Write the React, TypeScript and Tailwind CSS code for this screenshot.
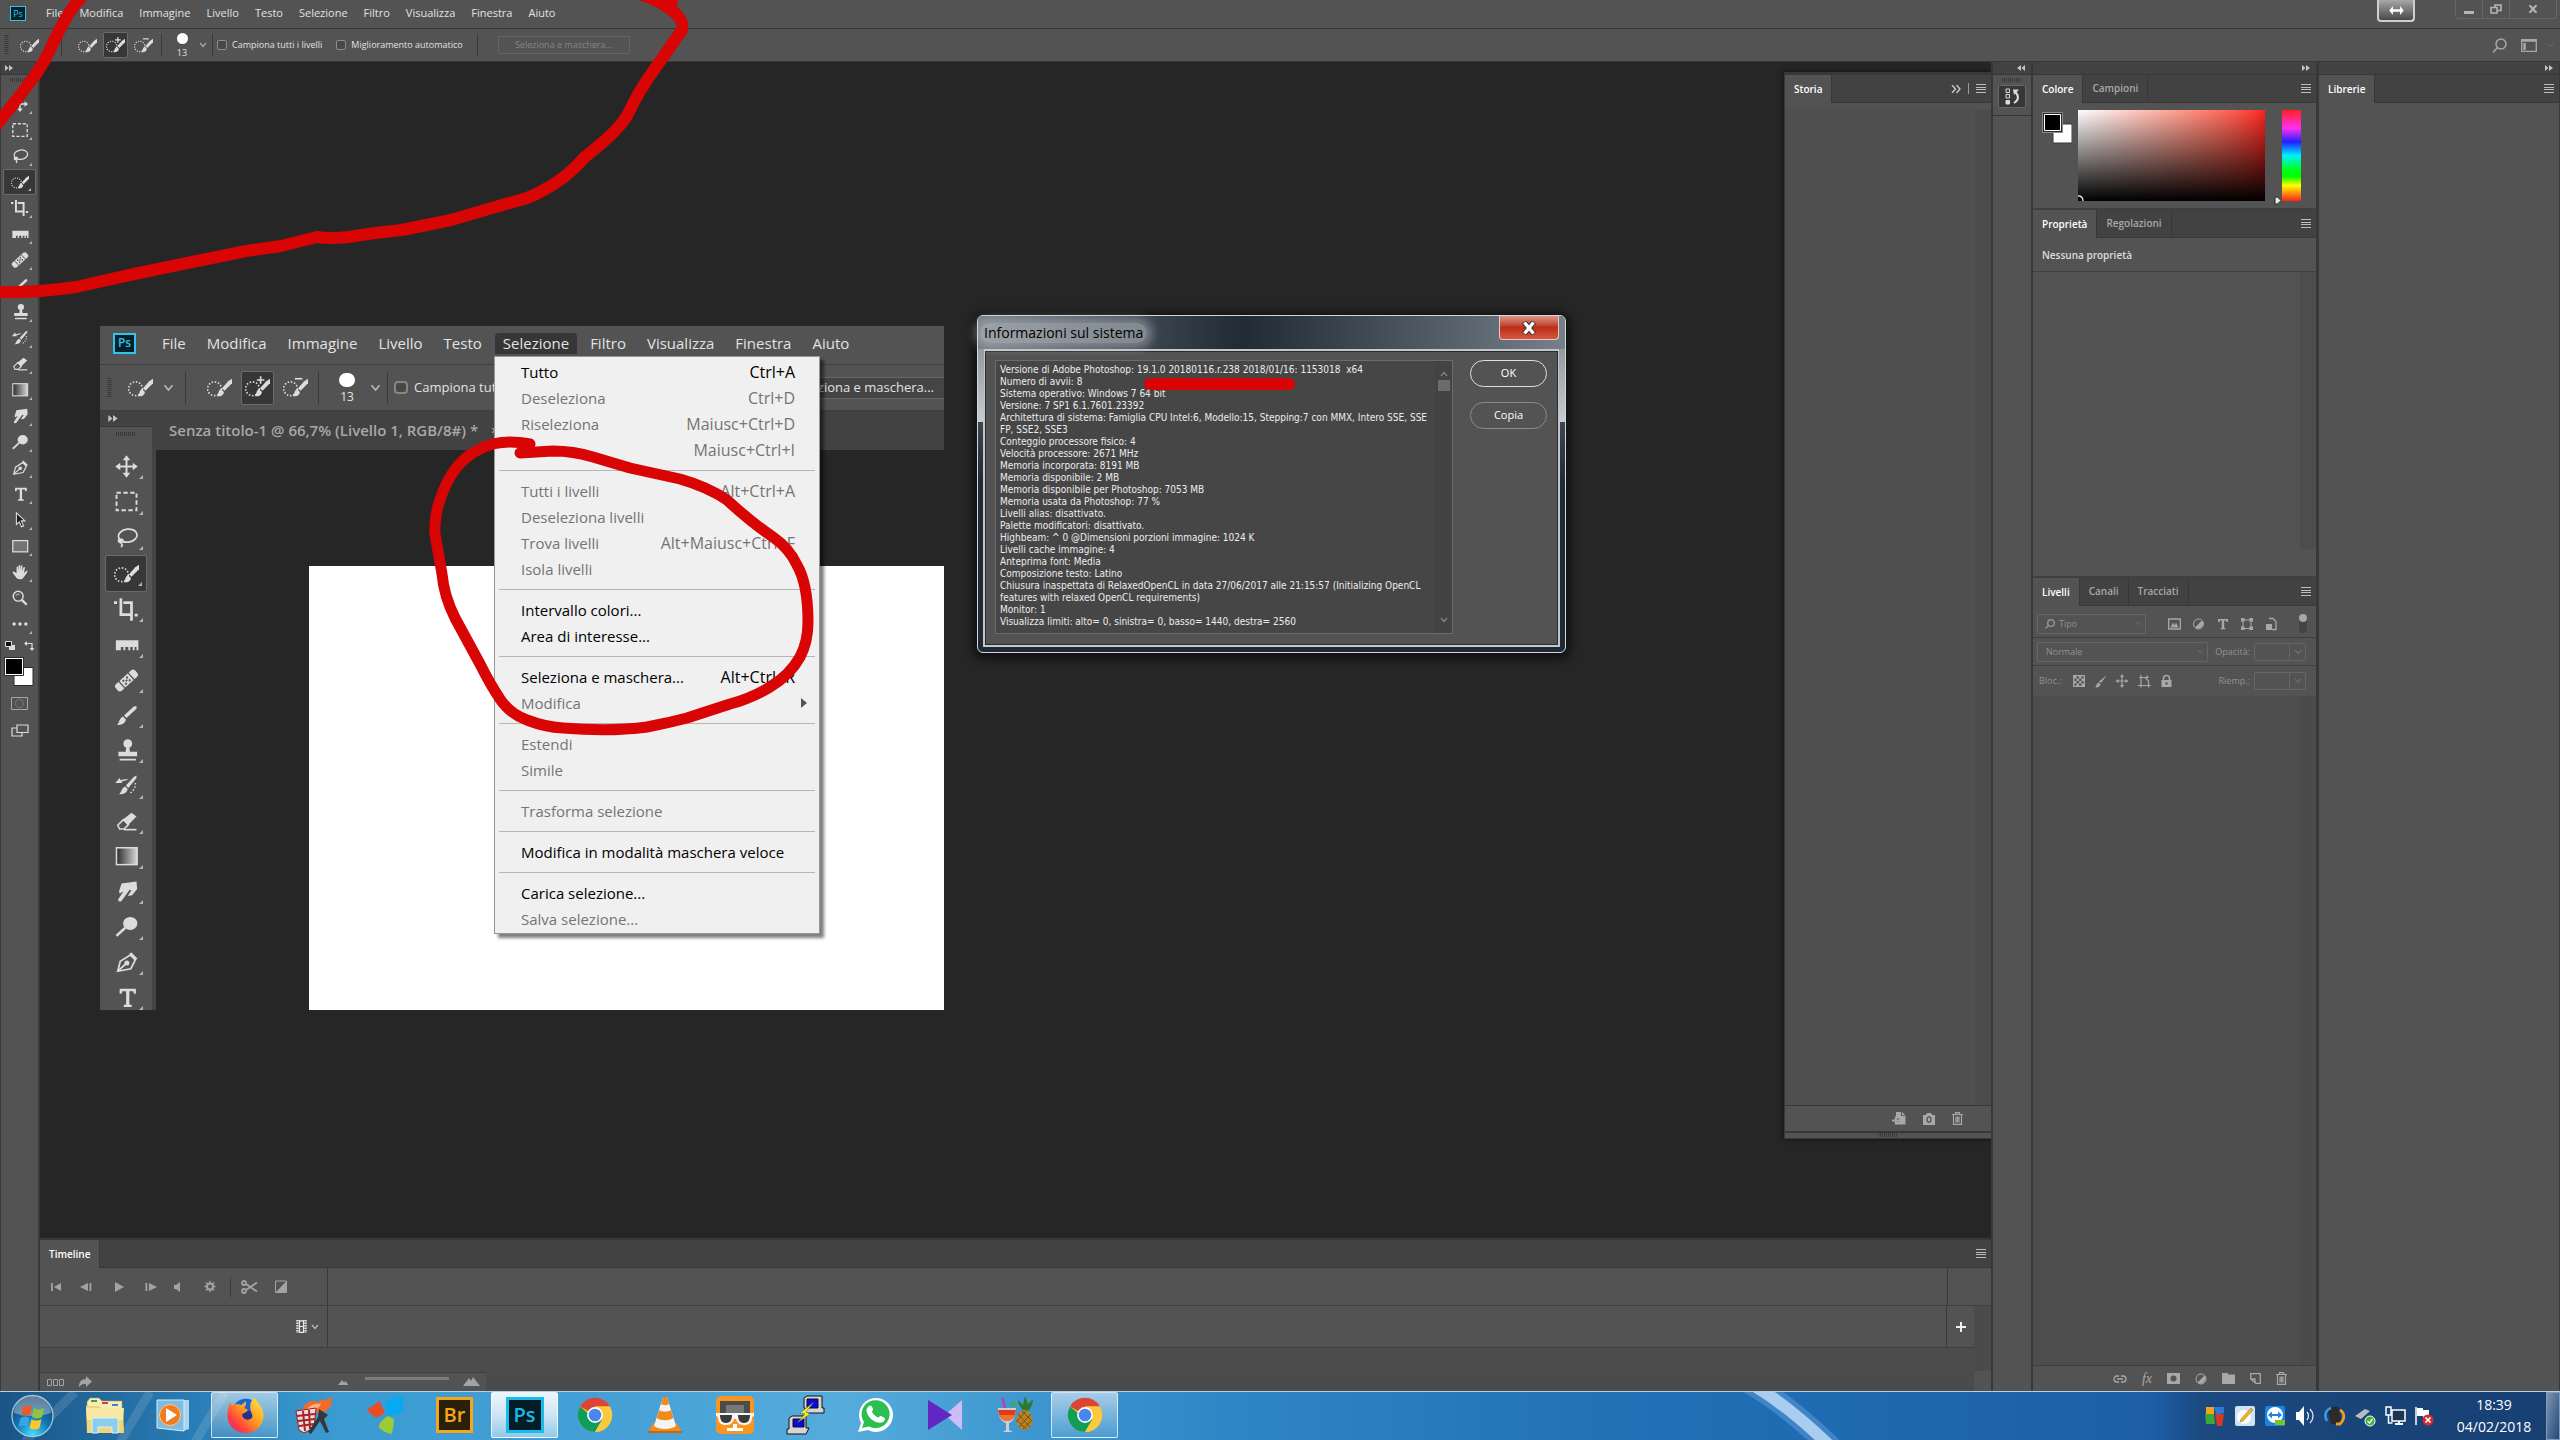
import React from "react";

type ToolName =
  | "move"
  | "marquee"
  | "lasso"
  | "quick"
  | "crop"
  | "ruler"
  | "heal"
  | "brush"
  | "stamp"
  | "history"
  | "eraser"
  | "gradient"
  | "smudge"
  | "dodge"
  | "pen"
  | "type"
  | "path"
  | "shape"
  | "hand"
  | "zoom"
  | "more";

const TOOLS: ToolName[] = [
  "move",
  "marquee",
  "lasso",
  "quick",
  "crop",
  "ruler",
  "heal",
  "brush",
  "stamp",
  "history",
  "eraser",
  "gradient",
  "smudge",
  "dodge",
  "pen",
  "type",
  "path",
  "shape",
  "hand",
  "zoom",
  "more",
];

const MENUS = [
  "File",
  "Modifica",
  "Immagine",
  "Livello",
  "Testo",
  "Selezione",
  "Filtro",
  "Visualizza",
  "Finestra",
  "Aiuto",
];

interface MenuEntry {
  label: string;
  keys?: string;
  enabled?: boolean;
  submenu?: boolean;
}

const SELECT_MENU: MenuEntry[][] = [
  [
    { label: "Tutto", keys: "Ctrl+A", enabled: true },
    { label: "Deseleziona", keys: "Ctrl+D" },
    { label: "Riseleziona", keys: "Maiusc+Ctrl+D" },
    { label: "", keys: "Maiusc+Ctrl+I" },
  ],
  [
    { label: "Tutti i livelli", keys: "Alt+Ctrl+A" },
    { label: "Deseleziona livelli" },
    { label: "Trova livelli", keys: "Alt+Maiusc+Ctrl+F" },
    { label: "Isola livelli" },
  ],
  [
    { label: "Intervallo colori...", enabled: true },
    { label: "Area di interesse...", enabled: true },
  ],
  [
    { label: "Seleziona e maschera...", keys: "Alt+Ctrl+R", enabled: true },
    { label: "Modifica", submenu: true },
  ],
  [{ label: "Estendi" }, { label: "Simile" }],
  [{ label: "Trasforma selezione" }],
  [{ label: "Modifica in modalità maschera veloce", enabled: true }],
  [{ label: "Carica selezione...", enabled: true }, { label: "Salva selezione..." }],
];

const SYSTEM_INFO = `Versione di Adobe Photoshop: 19.1.0 20180116.r.238 2018/01/16: 1153018  x64
Numero di avvii: 8
Sistema operativo: Windows 7 64 bit
Versione: 7 SP1 6.1.7601.23392
Architettura di sistema: Famiglia CPU Intel:6, Modello:15, Stepping:7 con MMX, Intero SSE, SSE
FP, SSE2, SSE3
Conteggio processore fisico: 4
Velocità processore: 2671 MHz
Memoria incorporata: 8191 MB
Memoria disponibile: 2 MB
Memoria disponibile per Photoshop: 7053 MB
Memoria usata da Photoshop: 77 %
Livelli alias: disattivato.
Palette modificatori: disattivato.
Highbeam: ^ 0 @Dimensioni porzioni immagine: 1024 K
Livelli cache immagine: 4
Anteprima font: Media
Composizione testo: Latino
Chiusura inaspettata di RelaxedOpenCL in data 27/06/2017 alle 21:15:57 (Initializing OpenCL
features with relaxed OpenCL requirements)
Monitor: 1
Visualizza limiti: alto= 0, sinistra= 0, basso= 1440, destra= 2560`;

const toolShape = (name: ToolName) => {
  switch (name) {
    case "move":
      return (
        <g fill="#dcdcdc">
          <path d="M9.2 4h1.6v12H9.2zM4 9.2h12v1.6H4z" />
          <path d="M10 1l3 4H7zM10 19l-3-4h6zM1 10l4-3v6zM19 10l-4 3V7z" />
        </g>
      );
    case "marquee":
      return (
        <rect x="2" y="3" width="16" height="14" fill="none" stroke="#dcdcdc" strokeWidth="1.500" strokeDasharray="3.500 2" />
      );
    case "lasso":
      return (
        <g fill="none" stroke="#dcdcdc" strokeWidth="1.400">
          <ellipse cx="11" cy="8.500" rx="7.500" ry="5.200" transform="rotate(-8 11 8.500)" />
          <path d="M4.500 11c-1.500 1-1 3 .5 3s3-1.500 1.500-2.500S4 13 6 15c1 1 .5 2-.5 2.500" />
        </g>
      );
    case "quick":
      return (
        <g>
          <circle cx="6" cy="11" r="5.500" fill="none" stroke="#dcdcdc" strokeWidth="1.300" strokeDasharray="1.200 1.400" />
          <path d="M20 3v3.500l-6 6-2-2 5-5.500z" fill="#dcdcdc" />
          <path d="M11.200 11.200l2.300 2.300c0 2.500-2.500 4-6 3.500 1.800-.8 1.300-4.800 3.700-5.800z" fill="#dcdcdc" />
        </g>
      );
    case "crop":
      return (
        <path d="M5.500 1v13H14M0 4.500h2.500M7.500 4.500H14V19M16.500 14.500h2.500" fill="none" stroke="#dcdcdc" strokeWidth="2.200" />
      );
    case "ruler":
      return (
        <path d="M1.500 6.500h18v8h-1.500v-2.500h-1.500V14.500H15V12h-2v2.500h-1.500V12H9v2.500H7.500V12H5.500v2.500h-4z" fill="#dcdcdc" />
      );
    case "heal":
      return (
        <g transform="rotate(-42 10 10)">
          <rect x="-.5" y="6.500" width="21" height="7" rx="2.500" fill="#dcdcdc" />
          <path d="M5 6v8M15 6v8" stroke="#535353" strokeWidth="1" />
          <g fill="#535353">
            <circle cx="8" cy="8.500" r=".9" />
            <circle cx="12" cy="8.500" r=".9" />
            <circle cx="10" cy="10" r=".9" />
            <circle cx="8" cy="11.600" r=".9" />
            <circle cx="12" cy="11.600" r=".9" />
          </g>
        </g>
      );
    case "brush":
      return (
        <g fill="#dcdcdc">
          <path d="M18 2.500v2L10 12l-2-2 8-7.500z" />
          <path d="M7.200 10.800l2.300 2.300C9 16.500 6 17.500 2.500 17.500c2-1.500 1.500-5.500 4.700-6.700z" />
        </g>
      );
    case "stamp":
      return (
        <g fill="#dcdcdc">
          <circle cx="11" cy="4.500" r="3.500" />
          <path d="M9.700 7.500h2.600l.4 3.500h5.800v3.500H3.500V11h5.800zM4.500 16.500h13V18h-13z" />
        </g>
      );
    case "history":
      return (
        <g fill="#dcdcdc">
          <path d="M18 2v2l-6.500 8-2-2L16 3z" />
          <path d="M9 10.800l2 2c-.6 3.200-3.500 4.200-7 4.200 2-1.400 1.800-5 5-6.200z" />
          <path d="M1 8l3.500-4 .8 1.800C8 4.800 10 5 12 5.200 9 6 7 6.500 6 7l.5 1z" />
          <path d="M17 8c.5 3-1 6-4 8" fill="none" stroke="#dcdcdc" strokeWidth="1.200" strokeDasharray="1.200 1.500" />
        </g>
      );
    case "eraser":
      return (
        <g>
          <path d="M7 8.500L14 3l4 3-6.500 6.500z" fill="#dcdcdc" />
          <path d="M3 13l4.500-4.500 4 4L8 16H4.500z" fill="none" stroke="#dcdcdc" strokeWidth="1.300" />
          <path d="M8 16.500h10" stroke="#dcdcdc" strokeWidth="1.300" />
        </g>
      );
    case "gradient":
      return (
        <g>
          <defs>
            <linearGradient id="toolGradient">
              <stop offset="0" stopColor="#2b2b2b" />
              <stop offset="1" stopColor="#d8d8d8" />
            </linearGradient>
          </defs>
          <rect x="2" y="3" width="16.500" height="13.500" fill="url(#toolGradient)" stroke="#dcdcdc" strokeWidth="1.200" />
        </g>
      );
    case "smudge":
      return (
        <path d="M6 3.500L18 2l.5 6-4 5L11 13.500l3-4.500-1.500-.5L6 17.500c-1 1-3.500.5-2.500-1.500l4-6-3 1.500-.5-1.500z" fill="#dcdcdc" />
      );
    case "dodge":
      return (
        <g>
          <ellipse cx="13" cy="7.500" rx="5.700" ry="5.200" fill="#dcdcdc" />
          <path d="M2 17.500l7-6.500" stroke="#dcdcdc" strokeWidth="2" />
        </g>
      );
    case "pen":
      return (
        <g fill="none" stroke="#dcdcdc" strokeWidth="1.400">
          <path d="M3 17l2-8 8-5 4 4-3.500 7z" />
          <path d="M3.500 16.500L9.500 11" />
          <circle cx="10.300" cy="10.300" r="1.300" fill="#dcdcdc" />
          <path d="M13 2.500l5 5" strokeWidth="2.200" />
        </g>
      );
    case "type":
      return (
        <path d="M4.500 3h13v4h-1.500l-.7-2h-3v10.500l1.900.5v1.500H7.800V16l1.900-.5V5h-3L6 7H4.500z" fill="#dcdcdc" />
      );
    case "path":
      return (
        <path d="M6 2l9.500 9h-4l2.500 5.500-2.300 1-2.400-5.500L6 15z" fill="#1d1d1d" stroke="#dcdcdc" strokeWidth="1.200" />
      );
    case "shape":
      return <rect x="2" y="4" width="16.500" height="12.500" fill="#747474" stroke="#dcdcdc" strokeWidth="1.400" />;
    case "hand":
      return (
        <path d="M6.200 11V5c0-1.400 1.800-1.400 1.800 0l.4 4V3.200c0-1.400 1.900-1.400 1.900 0V9l.6-5.500c.2-1.300 1.900-1.200 1.800.2L12.500 9l1.300-4c.4-1.200 2-.7 1.700.5L14.400 11l2.400-2c1.200-.8 2.200.3 1.300 1.300L14 16c-1 1.500-2 2-4 2-2.500 0-4-1-5-3L2 11c-.6-1.200.8-2 1.700-1z" fill="#dcdcdc" />
      );
    case "zoom":
      return (
        <g fill="none" stroke="#dcdcdc">
          <circle cx="8" cy="8" r="5.500" strokeWidth="1.600" />
          <path d="M12 12l5.500 5.500" strokeWidth="2.600" />
          <path d="M5.500 7.500c.5-1.500 2-2.200 4-1.500" strokeWidth="1" />
        </g>
      );
    case "more":
      return (
        <g fill="#dcdcdc">
          <circle cx="3.500" cy="10" r="1.900" />
          <circle cx="10" cy="10" r="1.900" />
          <circle cx="16.500" cy="10" r="1.900" />
        </g>
      );
  }
};

const ToolIcon: React.FC<{ name: ToolName; className?: string }> = ({ name, className }) => (
  <svg viewBox="0 0 20 20" className={className} aria-hidden="true">
    {toolShape(name)}
  </svg>
);

// Quick selection icon, optionally with the + / - mark used in the options bar
const SelectionModeIcon: React.FC<{ mark?: "plus" | "minus"; className?: string }> = ({ mark, className }) => (
  <svg viewBox="0 0 20 20" className={className} aria-hidden="true">
    {toolShape("quick")}
    {mark && <path d={mark === "plus" ? "M9.500 4h6M12.500 1v6" : "M9.500 3h6"} stroke="#dcdcdc" strokeWidth="1.300" />}
  </svg>
);

const Caret: React.FC<{ className: string }> = ({ className }) => (
  <svg viewBox="0 0 8 6" className={className} fill="none" stroke="currentColor" strokeWidth="1.200" aria-hidden="true">
    <path d="M1 1l3 3.500L7 1" />
  </svg>
);

const DoubleArrow: React.FC<{ left?: boolean; className?: string }> = ({ left, className = "h-[6px] w-[8px]" }) => (
  <svg viewBox="0 0 8 6" className={className} fill="#c4c4c4" aria-hidden="true">
    <path d={left ? "M4 0v6L0 3zM8 0v6L4.500 3z" : "M0 0l3.500 3L0 6zM4 0l4 3-4 3z"} />
  </svg>
);

const Burger: React.FC = () => (
  <button aria-label="Menu pannello" className="flex h-[9px] w-[10px] flex-col justify-between">
    <span className="h-px w-full bg-[#bdbdbd]" />
    <span className="h-px w-full bg-[#bdbdbd]" />
    <span className="h-px w-full bg-[#bdbdbd]" />
    <span className="h-px w-full bg-[#bdbdbd]" />
  </button>
);

const Grip: React.FC<{ vertical?: boolean }> = ({ vertical }) => (
  <svg width={vertical ? 5 : 20} height={vertical ? 20 : 4} aria-hidden="true">
    <path
      d={vertical ? "M2.500 0v20" : "M0 2h20"}
      stroke="#3a3a3a"
      strokeWidth="4"
      strokeDasharray="1 1"
    />
  </svg>
);

const PsLogo: React.FC<{ className: string }> = ({ className }) => (
  <span className={`flex items-center justify-center border-[#2fc4e8] bg-[#04202b] text-[#2fc4e8] ${className}`}>Ps</span>
);

const TitleBar: React.FC = () => (
  <header className="flex h-[29px] shrink-0 items-start border-b border-[#383838] text-[11px] leading-[16px] text-[#e2e2e2]">
    <nav className="flex items-center pt-[5px] pl-[10px]">
      <PsLogo className="mr-5 h-[15px] w-4 border text-[9px] leading-none" />
      <div className="flex gap-[16px]">
        {MENUS.map((menu) => (
          <button key={menu}>{menu}</button>
        ))}
      </div>
    </nav>
    <div className="ml-auto flex">
      <button
        aria-label="Ridimensiona"
        className="mr-10 flex h-[22px] w-[38px] items-center justify-center rounded-b border-2 border-t-0 border-[#cfcfcf] bg-linear-to-b from-[#a8a8a8] to-[#4a4a4a]"
      >
        <svg viewBox="0 0 16 10" className="h-[9px] w-[15px]" fill="#fff" aria-hidden="true">
          <path d="M0 5l4-5v3.500h8V0l4 5-4 5V6.500H4V10z" />
        </svg>
      </button>
      <div className="mr-[3px] flex h-[19px] rounded-b border border-t-0 border-[#666] text-[#c4c4c4]">
        <button aria-label="Riduci a icona" className="flex w-[27px] justify-center border-r border-[#666] pt-[11px]">
          <span className="h-[3px] w-[10px] bg-[#b5b5b5]" />
        </button>
        <button aria-label="Ripristina" className="flex w-[27px] items-center justify-center border-r border-[#666]">
          <svg viewBox="0 0 12 10" className="h-[10px] w-3" fill="none" stroke="#b5b5b5" strokeWidth="1.600" aria-hidden="true">
            <path d="M5 3V1h6v5.500H8M1 3.500h6V9H1z" />
          </svg>
        </button>
        <button aria-label="Chiudi" className="flex w-[46px] items-center justify-center">
          <svg viewBox="0 0 10 8" className="h-2 w-[10px]" stroke="#b5b5b5" strokeWidth="2" aria-hidden="true">
            <path d="M1.500 0l7 8M8.500 0l-7 8" />
          </svg>
        </button>
      </div>
    </div>
  </header>
);

const Divider: React.FC<{ className: string }> = ({ className }) => <span className={`w-px bg-[#3a3a3a] ${className}`} />;

const OptionsBar: React.FC = () => (
  <div className="flex h-[33px] shrink-0 items-center border-b border-[#383838] pl-1 text-[9px] text-[#e0e0e0]">
    <Grip vertical />
    <SelectionModeIcon className="ml-[11px] size-[19px]" />
    <Caret className="ml-2 h-[6px] w-2 text-[#a5a5a5]" />
    <Divider className="ml-[6px] h-[22px]" />
    <button aria-label="Nuova selezione" className="ml-4">
      <SelectionModeIcon className="size-[19px]" />
    </button>
    <button
      aria-label="Aggiungi a selezione"
      className="ml-[6px] flex h-[26px] w-[25px] items-center justify-center rounded-xs border border-[#6a6a6a] bg-[#373737]"
    >
      <SelectionModeIcon mark="plus" className="size-[19px]" />
    </button>
    <button aria-label="Sottrai da selezione" className="ml-[6px]">
      <SelectionModeIcon mark="minus" className="size-[19px]" />
    </button>
    <Divider className="ml-2 h-[22px]" />
    <button className="ml-[14px] flex w-3 flex-col items-center gap-1 leading-[10px]">
      <span className="size-[11px] rounded-full bg-white" />
      13
    </button>
    <Caret className="ml-[11px] h-[6px] w-2 text-[#a5a5a5]" />
    <Divider className="ml-[5px] h-[22px]" />
    <label className="ml-1 flex items-center gap-[5px]">
      <input type="checkbox" className="size-[10px] appearance-none rounded-xs border border-[#8c8c8c] bg-[#484848]" />
      Campiona tutti i livelli
    </label>
    <label className="ml-[14px] flex items-center gap-[5px]">
      <input type="checkbox" className="size-[10px] appearance-none rounded-xs border border-[#8c8c8c] bg-[#484848]" />
      Miglioramento automatico
    </label>
    <Divider className="ml-[14px] h-[22px]" />
    <button disabled className="ml-5 h-[18px] w-[132px] rounded-xs border border-[#646464] text-[#858585]">
      Seleziona e maschera...
    </button>
    <div className="mr-[6px] ml-auto flex items-center gap-[14px]">
      <svg viewBox="0 0 15 15" className="size-[15px]" fill="none" stroke="#a8a8a8" strokeWidth="1.500" aria-hidden="true">
        <circle cx="9" cy="6" r="5" />
        <path d="M5.500 9.500L1 14.500" />
      </svg>
      <svg viewBox="0 0 16 13" className="h-[13px] w-4" fill="none" stroke="#a8a8a8" strokeWidth="1.300" aria-hidden="true">
        <path d="M.7.7h14.600v11.600H.7zM.7 2h14.600" />
        <path d="M3.500 4v7" strokeWidth="2.500" />
      </svg>
      <Caret className="-ml-1 h-[5px] w-[7px] text-[#707070]" />
    </div>
  </div>
);

const Toolbar: React.FC = () => (
  <aside className="flex w-10 shrink-0 flex-col border-r-2 border-l border-[#3a3a3a] bg-[#535353]">
    <div className="flex h-[13px] items-center border-b border-[#383838] bg-[#424242] pl-1">
      <DoubleArrow />
    </div>
    <div className="flex h-4 items-start justify-center pt-[3px]">
      <Grip />
    </div>
    {TOOLS.map((tool) => (
      <button
        key={tool}
        aria-label={tool}
        className={`relative mx-[2px] flex h-[26px] items-center justify-center ${
          tool === "quick" ? "rounded-xs border border-[#6a6a6a] bg-[#373737]" : ""
        }`}
      >
        <ToolIcon name={tool} className="size-[18px]" />
        {tool !== "zoom" && (
          <span className="absolute right-[4px] bottom-[3px] border-b-3 border-l-3 border-b-[#b5b5b5] border-l-transparent" />
        )}
      </button>
    ))}
    <div className="flex h-[17px] items-center justify-between px-1">
      <svg viewBox="0 0 10 9" className="h-[9px] w-[10px]" aria-hidden="true">
        <path d="M4 4h6v5H4z" fill="#dcdcdc" />
        <path d="M.5.500h6v5h-6z" fill="#111" stroke="#dcdcdc" />
      </svg>
      <svg viewBox="0 0 10 10" className="size-[10px]" aria-hidden="true">
        <path d="M2 2.500h6V8" fill="none" stroke="#dcdcdc" strokeWidth="1.200" />
        <path d="M3 0v5L0 2.500zM5.500 7h5L8 10z" fill="#dcdcdc" />
      </svg>
    </div>
    <svg viewBox="0 0 30 30" className="mt-[3px] ml-[3px] size-[30px] shrink-0" aria-hidden="true">
      <path d="M10 10.500h19v18H10z" fill="#fff" stroke="#2b2b2b" />
      <path d="M.5.500h19v18H.5z" fill="#fff" stroke="#2b2b2b" />
      <path d="M2 2h16v15H2z" fill="#000" />
    </svg>
    <svg viewBox="0 0 17 13" className="mx-auto mt-[10px] h-[13px] w-[17px] shrink-0" fill="none" stroke="#a5a5a5" aria-hidden="true">
      <path d="M.5.500h16v12H.5z" />
      <circle cx="8.500" cy="6.500" r="4" strokeDasharray="1 1.200" />
    </svg>
    <svg viewBox="0 0 18 13" className="mx-auto mt-[14px] h-[13px] w-[18px] shrink-0" fill="#535353" stroke="#dcdcdc" strokeWidth="1.200" aria-hidden="true">
      <path d="M1 4h10v8H1z" />
      <path d="M6 1h11v7.500H6z" />
    </svg>
  </aside>
);

const SelectionMenu: React.FC = () => (
  <div className="absolute top-[30px] left-[394px] w-[326px] border border-[#979797] bg-[#f0f0f0] pt-[2px] pb-px shadow-[4px_4px_3px_rgba(0,0,0,0.5)]">
    {SELECT_MENU.map((group, index) => (
      <div key={index}>
        {index > 0 && (
          <div className="flex h-[15px] items-center px-1">
            <span className="h-px w-full bg-[#b5b5b5]" />
          </div>
        )}
        {group.map((entry) => (
          <button
            key={entry.label}
            className={`flex h-[26px] w-full items-center justify-between pr-6 pl-[26px] text-[15px] whitespace-nowrap ${
              entry.enabled ? "text-black" : "text-[#747474]"
            }`}
          >
            <span>{entry.label}</span>
            {entry.keys && <span className="text-base">{entry.keys}</span>}
            {entry.submenu && (
              <span className="-mr-3 border-y-5 border-l-6 border-y-transparent border-l-[#555]" />
            )}
          </button>
        ))}
      </div>
    ))}
  </div>
);

// The second, larger Photoshop window lying on the canvas
const EmbeddedWindow: React.FC = () => (
  <section className="absolute top-[264px] left-[60px] flex h-[684px] w-[844px] flex-col bg-[#535353] text-[#e2e2e2]">
    <div className="flex h-[39px] shrink-0 items-center border-b border-[#3f3f3f] pb-1 pl-[13px] text-[15px]">
      <PsLogo className="mr-[18px] h-[21px] w-[23px] border-2 text-[12px] font-semibold" />
      <div className="flex items-center gap-[5px]">
        {MENUS.map((menu) => (
          <button
            key={menu}
            className={`h-[21px] rounded-t px-2 leading-5 ${menu === "Selezione" ? "bg-[#363636]" : ""}`}
          >
            {menu}
          </button>
        ))}
      </div>
    </div>
    <div className="flex h-[46px] shrink-0 items-center overflow-hidden border-b border-[#3f3f3f] pl-[7px] text-[13px] whitespace-nowrap">
      <Grip vertical />
      <SelectionModeIcon className="ml-4 size-[25px] shrink-0" />
      <Caret className="ml-[10px] h-2 w-[11px] shrink-0 text-[#bbb]" />
      <Divider className="ml-[11px] h-8 shrink-0" />
      <SelectionModeIcon className="ml-[21px] size-[25px] shrink-0" />
      <span className="ml-[9px] flex h-[34px] w-[33px] shrink-0 items-center justify-center rounded-xs border border-[#6a6a6a] bg-[#373737]">
        <SelectionModeIcon mark="plus" className="size-[25px]" />
      </span>
      <SelectionModeIcon mark="minus" className="ml-[9px] size-[25px] shrink-0" />
      <Divider className="ml-[10px] h-8 shrink-0" />
      <span className="ml-5 flex w-4 shrink-0 flex-col items-center gap-1 text-[12px] leading-[12px]">
        <span className="h-[14px] w-4 rounded-full bg-white" />
        13
      </span>
      <Caret className="ml-[15px] h-2 w-[11px] shrink-0 text-[#bbb]" />
      <Divider className="ml-[6px] h-8 shrink-0" />
      <label className="ml-[6px] flex items-center gap-[6px]">
        <input type="checkbox" className="h-[13px] w-[14px] appearance-none rounded-sm border-2 border-[#858585] bg-[#484848]" />
        Campiona tutti i livelli
      </label>
      <button className="ml-auto h-[22px] border-y border-[#666] bg-[#454545] pr-[10px]">Seleziona e maschera...</button>
    </div>
    <div className="flex min-h-0 flex-1">
      <div className="flex w-14 shrink-0 flex-col overflow-hidden border-r-4 border-[#434343]">
        <div className="flex h-4 shrink-0 items-center border-b border-[#383838] bg-[#424242] pl-2">
          <DoubleArrow className="h-[7px] w-[10px]" />
        </div>
        <div className="flex h-[22px] shrink-0 items-start justify-center pt-[5px]">
          <Grip />
        </div>
        <div className="flex h-[566px] shrink-0 flex-col">
          {TOOLS.slice(0, 16).map((tool) => (
            <button
              key={tool}
              aria-label={tool}
              className={`relative mx-[5px] flex flex-1 items-center justify-center ${
                tool === "quick" ? "rounded-xs border border-[#6a6a6a] bg-[#373737]" : ""
              }`}
            >
              <ToolIcon name={tool} className="size-[25px]" />
              <span className="absolute right-[4px] bottom-[5px] border-b-4 border-l-4 border-b-[#b5b5b5] border-l-transparent" />
            </button>
          ))}
        </div>
      </div>
      <div className="flex min-w-0 flex-1 flex-col bg-[#262626]">
        <div className="flex h-[39px] shrink-0 items-center bg-[#424242] pl-[13px] text-[15px] font-semibold text-[#a8a8a8]">
          Senza titolo-1 @ 66,7% (Livello 1, RGB/8#) *
          <span className="ml-[13px] text-[13px]">×</span>
        </div>
        <div className="mt-[116px] ml-[153px] flex-1 bg-white" />
      </div>
    </div>
    <SelectionMenu />
  </section>
);

const SystemInfoDialog: React.FC = () => (
  <section
    role="dialog"
    aria-labelledby="info-title"
    className="absolute top-[253px] left-[937px] flex h-[338px] w-[589px] flex-col rounded-md border border-[#d5d8da] bg-linear-to-b from-[#727b83] via-[#1e2a36] to-[#1e2a36] shadow-[0_2px_10px_4px_rgba(0,0,0,0.6)]"
  >
    <div className="absolute top-0 left-0 h-[106px] w-[6px] rounded-tl bg-linear-to-b from-[#7b838b] to-[#c9cccf]" />
    <div className="absolute top-0 right-0 h-[106px] w-[6px] rounded-tr bg-linear-to-b from-[#7b838b] to-[#c9cccf]" />
    <div className="relative flex h-[33px] shrink-0 items-center rounded-t-md bg-linear-to-r from-[#707982] via-[#212b36] via-45% to-[#76808a]">
      <h2
        id="info-title"
        className="ml-[2px] rounded-full bg-[#c5cbd0]/50 px-1 text-[14px] leading-5 text-black shadow-[0_0_8px_6px_rgba(197,203,208,0.4)]"
      >
        Informazioni sul sistema
      </h2>
      <button
        aria-label="Chiudi finestra"
        className="absolute top-0 right-[6px] flex h-6 w-[60px] items-center justify-center rounded-b border border-t-0 border-[#e5c8c4] bg-linear-to-b from-[#dc9388] via-[#bb2f17] via-50% to-[#d5573f]"
      >
        <svg viewBox="0 0 16 14" className="h-[14px] w-4" aria-hidden="true">
          <path d="M3 1l10 12M13 1L3 13" stroke="#4a3434" strokeWidth="5.500" />
          <path d="M3.500 1.500l9 11M12.500 1.500l-9 11" stroke="#fff" strokeWidth="3.300" />
        </svg>
      </button>
    </div>
    <div className="mx-[5px] mb-[5px] flex min-h-0 flex-1 items-start gap-[17px] border-2 border-[#c3c7ca] bg-[#535353] pt-[9px] pl-[10px] outline-1 -outline-offset-3 outline-[#2b2b2b]">
      <div className="relative flex h-[274px] w-[458px] border border-[#6b6b6b] bg-[#464646]">
        <textarea
          readOnly
          wrap="off"
          aria-label="Informazioni sul sistema"
          className="h-full flex-1 resize-none overflow-hidden px-1 pt-[3px] font-['DejaVu_Sans_Condensed',sans-serif] text-[10px] leading-[12px] text-[#ededed] outline-none"
          value={SYSTEM_INFO}
        />
        <div className="flex w-[17px] flex-col items-center bg-[#434343] py-[10px] text-[#858585]">
          <Caret className="h-[6px] w-2 rotate-180" />
          <span className="mt-[3px] h-[11px] w-3 bg-[#6b6b6b]" />
          <Caret className="mt-auto h-[6px] w-2" />
        </div>
        <span className="absolute top-[17px] left-[148px] h-[12px] w-[151px] rounded-md bg-[#d90404]" />
      </div>
      <div className="flex flex-col gap-[15px] text-[11px] text-white">
        <button className="h-[27px] w-[77px] rounded-full border border-[#e0e0e0]">OK</button>
        <button className="h-[27px] w-[77px] rounded-full border border-[#8a8a8a]">Copia</button>
      </div>
    </div>
  </section>
);

interface TabBarProps {
  tabs: string[];
  extra?: React.ReactNode;
}

const TabBar: React.FC<TabBarProps> = ({ tabs, extra }) => (
  <div className="flex h-[28px] shrink-0 bg-[#424242] text-[10px] font-semibold">
    {tabs.map((tab, index) => (
      <button
        key={tab}
        className={`border-r border-[#383838] px-[9px] ${
          index === 0 ? "bg-[#535353] text-white" : "border-b text-[#a8a8a8]"
        }`}
      >
        {tab}
      </button>
    ))}
    <div className="flex flex-1 items-center justify-end gap-[7px] border-b border-[#383838] pr-[5px]">
      {extra}
      <Burger />
    </div>
  </div>
);

const TrashIcon: React.FC = () => (
  <svg viewBox="0 0 11 13" className="h-[13px] w-[11px]" fill="none" stroke="#a8a8a8" strokeWidth="1.200" aria-hidden="true">
    <path d="M0 2.500h11M3.500 2V.6h4V2M1.500 3v9.400h8V3M4 4.500v6M5.500 4.500v6M7 4.500v6" />
  </svg>
);

const HistoryPanel: React.FC = () => (
  <section className="absolute top-[10px] right-0 flex h-[1067px] w-[207px] flex-col border-l border-t-3 border-[#383838] bg-[#535353] shadow-[0_0_6px_rgba(0,0,0,0.6)]">
    <TabBar
      tabs={["Storia"]}
      extra={
        <>
          <svg viewBox="0 0 10 8" className="h-2 w-[10px]" fill="none" stroke="#d0d0d0" strokeWidth="1.300" aria-hidden="true">
            <path d="M1 0l3.500 4L1 8M5.500 0L9 4 5.500 8" />
          </svg>
          <span className="h-[11px] w-px bg-[#999]" />
        </>
      }
    />
    <div className="mt-[6px] flex flex-1 bg-[#4f4f4f]">
      <div className="ml-auto w-4 bg-[#4c4c4c]" />
    </div>
    <div className="flex h-[26px] shrink-0 items-center justify-end gap-4 border-t border-[#383838] pr-[28px]">
      <svg viewBox="0 0 14 13" className="h-[13px] w-[14px]" fill="#a8a8a8" aria-hidden="true">
        <path d="M4 0h5v4h4.500v8.500H4V9.800h3.200V6.500H4z" />
        <path d="M2.800 4.500h2v3h3v2h-3v3h-2v-3H0v-2h2.800zM10 0l3.500 3.200H10z" />
      </svg>
      <svg viewBox="0 0 14 12" className="h-3 w-[14px]" aria-hidden="true">
        <path d="M1 2h3l1-2h4l1 2h3v10H1z" fill="#a8a8a8" />
        <ellipse cx="7" cy="6.500" rx="2" ry="2.700" fill="#a8a8a8" stroke="#535353" strokeWidth="1.300" />
      </svg>
      <TrashIcon />
    </div>
    <div className="flex h-[8px] shrink-0 justify-center border-t-2 border-b border-[#383838]">
      <Grip />
    </div>
  </section>
);

const Timeline: React.FC = () => (
  <section className="flex h-[153px] shrink-0 flex-col border-t-2 border-[#383838] bg-[#535353]">
    <TabBar tabs={["Timeline"]} />
    <div className="flex h-[38px] shrink-0 border-b border-[#3f3f3f]">
      <div className="flex w-[288px] shrink-0 items-center border-r border-[#3a3a3a] pl-[11px]">
        <svg viewBox="0 0 240 20" className="h-5 w-[240px]" fill="#a3a3a3" aria-hidden="true">
          <path d="M0 6h1.800v8H0zM10 6v8l-7-4zM37 6v8l-8-4zM38.500 6h1.800v8h-1.800zM64 5l9 5-9 5zM94.500 6h1.800v8h-1.800zM98 6l8 4-8 4zM123 8h2l4-3v10l-4-3h-2z" />
          <circle cx="159" cy="9.500" r="3" fill="none" stroke="#a3a3a3" strokeWidth="2" />
          <path
            d="M159 4v2.500M159 12.500V15M153.500 9.500h2.500M162 9.500h2.500M155 5.500l2 2M161 11.500l2 2M163 5.500l-2 2M157 11.500l-2 2"
            stroke="#a3a3a3"
            strokeWidth="1.500"
          />
          <path d="M179 -6h1v32h-1z" fill="#3a3a3a" />
          <g fill="none" stroke="#a3a3a3" strokeWidth="1.800">
            <circle cx="193" cy="6" r="2" />
            <circle cx="193" cy="14" r="2" />
            <path d="M195 7l11 7.500M195 13l11-7.500" />
          </g>
          <path d="M224.500 4h11v11.500h-11z" fill="none" stroke="#a3a3a3" />
          <path d="M235.500 4v11.500h-11z" />
        </svg>
      </div>
      <div className="mr-[43px] flex-1 border-r border-[#3a3a3a]" />
    </div>
    <div className="flex min-h-0 flex-1">
      <div className="flex min-w-0 flex-1 flex-col">
        <div className="flex h-[42px] shrink-0 border-b border-[#3f3f3f]">
          <div className="flex w-[288px] shrink-0 items-center justify-end gap-1 border-r border-[#3a3a3a] pr-2">
            <svg viewBox="0 0 11 13" className="h-[13px] w-[11px]" fill="none" stroke="#e6e6e6" aria-hidden="true">
              <path d="M1.500 0v13M9.500 0v13" strokeWidth="2.500" strokeDasharray="1.500 1" />
              <path d="M3.500 0v13M7.500 0v13M3 .8h5M3 6.500h5M3 12.300h5" strokeWidth="1.200" />
            </svg>
            <Caret className="h-[6px] w-2 text-[#bbb]" />
          </div>
          <div className="flex-1" />
          <button aria-label="Aggiungi traccia" className="flex w-7 items-center justify-center border-l border-[#3a3a3a]">
            <svg viewBox="0 0 10 10" className="size-[10px]" stroke="#f0f0f0" strokeWidth="2" aria-hidden="true">
              <path d="M5 0v10M0 5h10" />
            </svg>
          </button>
        </div>
        <div className="h-6 shrink-0 bg-[#4c4c4c]" />
        <div className="flex min-h-0 flex-1 bg-[#4b4b4b]">
          <div className="flex w-[446px] items-center border-t border-[#3f3f3f] bg-[#535353] pl-[7px]">
            <svg viewBox="0 0 436 16" className="h-4 w-[436px]" fill="#a3a3a3" aria-hidden="true">
              <path d="M.5 5.500h4v6h-4zM6.500 5.500h4v6h-4zM12.500 5.500h4v6h-4z" fill="none" stroke="#a3a3a3" />
              <path d="M32 13c0-5 2-8 7-8V2l6 5.500-6 5.500v-3c-3 0-5 .5-7 3z" />
              <path d="M291 11l4-5 2 2.500 1.500-1.500 3 4z" />
              <path d="M318 3h84v3h-84z" fill="#7b7b7b" />
              <path d="M416 12l6-8 2 3 2-4 7 9z" />
            </svg>
          </div>
        </div>
      </div>
      <div className="flex w-[17px] shrink-0 flex-col justify-end bg-[#4b4b4b]">
        <div className="h-5 bg-[#535353]" />
      </div>
    </div>
  </section>
);

const ColorPanel: React.FC = () => (
  <section className="flex h-[133px] shrink-0 flex-col">
    <TabBar tabs={["Colore", "Campioni"]} />
    <div className="flex items-start pt-[7px] pl-[9px]">
      <svg viewBox="0 0 30 32" className="mt-[2px] h-8 w-[30px]" aria-hidden="true">
        <path d="M11 12h19v19H11z" fill="#fff" stroke="#3a3a3a" />
        <path d="M.5.500h20v20H.5z" fill="#2b2b2b" stroke="#8a8a8a" />
        <path d="M2.500 2.500h16v16h-16z" fill="#000" stroke="#fff" />
      </svg>
      <div className="relative ml-[6px] h-[91px] flex-1 bg-linear-to-r from-white to-[#ff2020]">
        <div className="h-full bg-linear-to-b from-transparent to-black" />
        <svg viewBox="0 0 6 6" className="absolute bottom-0 left-0 size-[6px]" fill="none" stroke="#fff" strokeWidth="1.200" aria-hidden="true">
          <path d="M0 .8c3 0 5 2 5 5.200" />
        </svg>
      </div>
      <svg viewBox="0 0 8 9" className="mt-[86px] ml-[9px] h-[9px] w-2" aria-hidden="true">
        <path d="M1 1h2.500L7 4.500 3.500 8H1z" fill="#eee" stroke="#222" />
      </svg>
      <div className="mr-[15px] h-[91px] w-[19px] bg-[linear-gradient(#ff2020,#ff30f0_20%,#2020ff_35%,#00f0ff_50%,#00ff20_65%,#00ff00_73%,#ffff00_83%,#ff2020)]" />
    </div>
  </section>
);

const PropertiesPanel: React.FC = () => (
  <section className="flex h-[368px] shrink-0 flex-col border-t-2 border-[#3f3f3f]">
    <TabBar tabs={["Proprietà", "Regolazioni"]} />
    <p className="h-[34px] shrink-0 border-b border-[#3f3f3f] pl-[9px] text-[10px] leading-[35px] font-semibold text-[#dedede]">
      Nessuna proprietà
    </p>
    <div className="flex flex-1">
      <div className="mb-[26px] ml-auto w-4 bg-[#4d4d4d]" />
    </div>
  </section>
);

const PercentField: React.FC<{ id: string }> = ({ id }) => (
  <span className="flex h-[18px] w-[52px] shrink-0 items-center rounded-xs border border-[#666]">
    <input id={id} className="h-full w-[35px] border-r border-[#666] outline-none" />
    <Caret className="ml-1 h-[6px] w-2 text-[#6e6e6e]" />
  </span>
);

const LayersPanel: React.FC = () => (
  <section className="flex min-h-0 flex-1 flex-col border-t-2 border-[#3f3f3f] text-[9px] text-[#919191]">
    <TabBar tabs={["Livelli", "Canali", "Tracciati"]} />
    <div className="flex h-[32px] shrink-0 items-center border-b border-[#3f3f3f] pt-1 pr-[9px] pl-1">
      <div className="relative flex items-center">
        <select aria-label="Filtro livelli" className="h-5 w-[109px] appearance-none rounded-xs border border-[#666] pl-[21px] outline-none">
          <option>Tipo</option>
        </select>
        <svg viewBox="0 0 10 10" className="absolute left-2 size-[10px]" fill="none" stroke="#919191" strokeWidth="1.500" aria-hidden="true">
          <circle cx="6" cy="4" r="3.300" />
          <path d="M3.500 6.500L.5 9.500" />
        </svg>
        <Caret className="absolute right-1 h-[5px] w-[7px] text-[#707070]" />
      </div>
      <svg viewBox="0 0 110 14" className="ml-[22px] h-[14px] w-[110px]" fill="#a8a8a8" aria-hidden="true">
        <path d="M.7 2h11.600v10H.7z" fill="none" stroke="#a8a8a8" strokeWidth="1.300" />
        <path d="M2.500 10.500l2.500-5 1.500 3 1.500-3 2.500 5z" />
        <circle cx="30.500" cy="7" r="5" fill="none" stroke="#a8a8a8" />
        <path d="M27 10.500a5 5 0 0 0 7-7z" />
        <path d="M50 2h10v3h-1.500l-.5-1.500h-1.800v7.500l1.300.4v.9h-5v-.9l1.300-.4V3.500H52L51.500 5H50z" />
        <path d="M75 3h8v8.500h-8z" fill="none" stroke="#a8a8a8" />
        <path d="M73 1h3.500v3.500H73zM81.500 1H85v3.500h-3.500zM73 9.500h3.500V13H73zM81.500 9.500H85V13h-3.500z" />
        <path d="M101 1.500h4l3 3v8h-4" fill="none" stroke="#a8a8a8" strokeWidth="1.300" />
        <path d="M98 7h6v6h-6z" />
      </svg>
      <button aria-label="Attiva filtro" className="ml-auto h-[18px] w-2 rounded-full bg-[#444]">
        <span className="-mt-[10px] block size-2 rounded-full bg-[#a8a8a8]" />
      </button>
    </div>
    <div className="flex h-[28px] shrink-0 items-center justify-between border-b border-[#3f3f3f] pr-[10px] pl-1">
      <div className="relative flex items-center">
        <select aria-label="Metodo di fusione" className="h-5 w-[171px] appearance-none rounded-xs border border-[#666] pl-2 outline-none">
          <option>Normale</option>
        </select>
        <Caret className="absolute right-1 h-[5px] w-[7px] text-[#707070]" />
      </div>
      <div className="flex items-center gap-1">
        <label htmlFor="opacity">Opacità:</label>
        <PercentField id="opacity" />
      </div>
    </div>
    <div className="flex h-[30px] shrink-0 items-center pr-[10px] pl-[6px]">
      <span className="w-[34px]">Bloc.:</span>
      <svg viewBox="0 0 102 14" className="h-[14px] w-[102px]" fill="#a8a8a8" aria-hidden="true">
        <path d="M.7 1.700h10.600v10.600H.7z" fill="none" stroke="#a8a8a8" strokeWidth="1.300" />
        <path d="M1 2h2.500v2.500H1zM6 2h2.500v2.500H6zM3.500 4.500H6V7H3.500zM8.500 4.500H11V7H8.500zM1 7h2.500v2.500H1zM6 7h2.500v2.500H6zM3.500 9.500H6V12H3.500zM8.500 9.500H11V12H8.500z" />
        <path d="M34 1l-6 8-2-1.500zM25.500 8.500l2 1.800c0 2.500-3 3.500-5.500 3 2-1 1-4 3.500-4.800z" />
        <path d="M49 2v10M44 7h10" stroke="#a8a8a8" strokeWidth="1.200" />
        <path d="M49 0l2 3h-4zM49 14l-2-3h4zM42.500 7l3-2v4zM55.500 7l-3 2V5z" />
        <path d="M66 3.500h9l-1.500-2M68 1v12.500M65 11.500h13M75.500 13.500V7l-3-3" fill="none" stroke="#a8a8a8" strokeWidth="1.200" />
        <path d="M88.500 6h10v7h-10z" />
        <path d="M90.500 6V4.500a3 3 0 0 1 6 0V6" fill="none" stroke="#a8a8a8" strokeWidth="1.600" />
        <circle cx="93.500" cy="9.500" r="1.200" fill="#535353" />
      </svg>
      <div className="ml-auto flex items-center gap-1">
        <label htmlFor="fill">Riemp.:</label>
        <PercentField id="fill" />
      </div>
    </div>
    <div className="flex flex-1 bg-[#4d4d4d]">
      <div className="ml-auto w-4 bg-[#4b4b4b]" />
    </div>
    <div className="flex h-[26px] shrink-0 items-center justify-end gap-[15px] border-t border-[#3f3f3f] pr-[29px] text-[#a8a8a8]">
      <svg viewBox="0 0 14 8" className="h-2 w-[14px]" fill="none" stroke="#a8a8a8" strokeWidth="1.300" aria-hidden="true">
        <path d="M6 1H4a3 3 0 0 0 0 6h2M8 1h2a3 3 0 0 1 0 6H8M4 4h6" />
      </svg>
      <span className="font-['Liberation_Serif',serif] text-[14px] leading-none italic">fx</span>
      <svg viewBox="0 0 13 11" className="h-[11px] w-[13px]" aria-hidden="true">
        <path d="M0 0h13v11H0z" fill="#a8a8a8" />
        <circle cx="6.500" cy="5.500" r="3" fill="#535353" />
      </svg>
      <svg viewBox="0 0 12 12" className="size-3" aria-hidden="true">
        <circle cx="6" cy="6" r="5" fill="none" stroke="#a8a8a8" />
        <path d="M2.500 9.500a5 5 0 0 0 7-7z" fill="#a8a8a8" />
      </svg>
      <svg viewBox="0 0 13 11" className="h-[11px] w-[13px]" fill="#a8a8a8" aria-hidden="true">
        <path d="M0 0h6v1.500h7V11H0z" />
      </svg>
      <svg viewBox="0 0 11 11" className="size-[11px]" fill="none" stroke="#a8a8a8" strokeWidth="1.300" aria-hidden="true">
        <path d="M.7 6V.7h9.600v9.600H6zM.7 6H5v4.300" />
      </svg>
      <TrashIcon />
    </div>
  </section>
);

const DockHeader: React.FC<{ left?: boolean }> = ({ left }) => (
  <div className="flex h-[13px] shrink-0 items-center justify-end border-b border-[#383838] bg-[#424242] pr-[6px]">
    <DoubleArrow left={left} />
  </div>
);

const Dock: React.FC = () => (
  <aside className="flex shrink-0 bg-[#535353]">
    <div className="flex w-10 flex-col border-l-2 border-[#383838]">
      <DockHeader left />
      <div className="flex h-[41px] flex-col items-center gap-[3px] border-b border-[#383838] pt-[3px]">
        <Grip />
        <button aria-label="Storia" className="flex h-[23px] w-7 items-center justify-center rounded-xs border border-[#666] bg-[#373737]">
          <svg viewBox="0 0 15 17" className="h-[17px] w-[15px]" fill="none" stroke="#dcdcdc" aria-hidden="true">
            <path d="M1 1h3.500v3.500H1zM1 6.500h3.500V10H1z" />
            <path d="M1 12.500h3.500V16H1z" fill="#dcdcdc" />
            <path d="M9 15c5-3 5-7 1.500-11" strokeWidth="2" />
            <path d="M8 1.500h6l-5 5.500z" fill="#dcdcdc" stroke="none" />
          </svg>
        </button>
      </div>
    </div>
    <div className="flex w-[287px] flex-col border-x-2 border-[#383838]">
      <DockHeader />
      <ColorPanel />
      <PropertiesPanel />
      <LayersPanel />
    </div>
    <div className="flex w-[242px] flex-col border-x border-[#383838]">
      <DockHeader />
      <TabBar tabs={["Librerie"]} />
    </div>
  </aside>
);

const ChromeIcon: React.FC = () => (
  <svg viewBox="0 0 40 40" className="size-9" aria-hidden="true">
    <circle cx="20" cy="20" r="19" fill="#fbc93d" />
    <path d="M20 20L3.500 10.500A19 19 0 0 1 36.500 10.500H20z" fill="#dc4437" />
    <path d="M3.500 10.500A19 19 0 0 0 20 39l8.200-14.200H20z" fill="#109d58" />
    <path d="M20 39a19 19 0 0 0 16.500-28.500H20l8.300 14.300z" fill="#fbc93d" />
    <circle cx="20" cy="20" r="8.800" fill="#fff" />
    <circle cx="20" cy="20" r="7" fill="#4a86f0" />
  </svg>
);

const TASKBAR_APPS: { name: string; state?: "open" | "active"; icon: React.ReactNode }[] = [
  {
    name: "Esplora risorse",
    icon: (
      <svg viewBox="0 0 40 38" className="h-[38px] w-10" aria-hidden="true">
        <path d="M2 6l3-4h9l3 3h20v8H2z" fill="#f5ecb9" stroke="#b9a04e" strokeWidth=".6" />
        <path d="M6 4h6v2H6z" fill="#36a14a" />
        <path d="M17 6h6v2h-6z" fill="#d64333" />
        <path d="M27 8h6v2h-6z" fill="#3b86cf" />
        <path d="M1 10h13l3 2h21l1 25H2z" fill="#efd778" />
        <path d="M1 12h38l-1 12H2z" fill="#f7e9a3" />
        <path d="M7 24c0-2 1-2 3-2h20c2 0 3 0 3 2v13h-6v-6H13v6H7z" fill="#8ccdec" stroke="#d6f1fb" />
      </svg>
    ),
  },
  {
    name: "Windows Media Player",
    icon: (
      <svg viewBox="0 0 34 34" className="mr-1 size-[34px]" aria-hidden="true">
        <path d="M8 2h25v29l-6 2z" fill="#a9d5ee" />
        <path d="M1 2h27v31L1 30z" fill="#7dbde4" stroke="#d3ecf8" />
        <circle cx="14" cy="17" r="11" fill="#ee7c22" />
        <circle cx="14" cy="17" r="10.500" fill="none" stroke="#ffd1a0" />
        <path d="M10 10l11 7-11 7z" fill="#fff" />
      </svg>
    ),
  },
  {
    name: "Firefox",
    state: "open",
    icon: (
      <svg viewBox="0 0 40 40" className="size-[38px]" aria-hidden="true">
        <defs>
          <linearGradient id="fox" x1="1" y1="0" x2="0" y2="1">
            <stop offset="0" stopColor="#fff04a" />
            <stop offset=".45" stopColor="#ff9a1f" />
            <stop offset=".75" stopColor="#ff3b42" />
            <stop offset="1" stopColor="#e0209a" />
          </linearGradient>
        </defs>
        <circle cx="21" cy="18" r="15" fill="#1766d8" />
        <circle cx="22" cy="24" r="9" fill="#22338f" />
        <path
          d="M4 6c1 2 2 3 4 3.500 2-1.500 5-1.500 8 0l5-4c0 4 0 5-2 7l4 2c-1 3-4 3-6 5 0 5 6 7 10 4 2-2 0-5-1-8-1-5-1-10 4-14 1 4 9 8 9.500 18.500C39.500 31 31 39 20.500 39S1 31 1.500 20C1.700 13 3 10 4 6z"
          fill="url(#fox)"
        />
      </svg>
    ),
  },
  {
    name: "Burn",
    icon: (
      <svg viewBox="0 0 40 38" className="h-[38px] w-10" aria-hidden="true">
        <path d="M7 14c2-7 9-10 14-9-1 2 3 1 6-2 0 2 6 1 11-3-2 4-2 5-1 7-3 8-9 10-15 10z" fill="#f26a2c" />
        <path d="M12 13c4-5 9-6 14-5-2 4-6 6-10 6z" fill="#ffb48c" />
        <path d="M1 15l20-3-2 20-10 5-5-3z" fill="#e9dede" stroke="#a01818" />
        <path d="M2 20l18-2M3 25l17-2M4 30l15-2M8 15l2 20M14 14l1 19" stroke="#a8232a" strokeWidth="2" />
        <path d="M24 13l9 6-4 4 5 13-3 1-6-12-9 13-3-2 10-15z" fill="#33383c" />
      </svg>
    ),
  },
  {
    name: "Foto",
    icon: (
      <svg viewBox="0 0 40 40" className="size-[38px]" aria-hidden="true">
        <path d="M1 13c5-1 9-4 13-8l6 13-9 5c-4-2-8-5-10-10z" fill="#ea4b25" />
        <path d="M20 7c4-4 11-7 19-6v14c-5 5-11 6-17 5z" fill="#05abee" />
        <path d="M13 32c2-4 5-8 10-11l6 3c1 6-1 12-2 16-6-1-11-4-14-8z" fill="#9ccb38" />
      </svg>
    ),
  },
  {
    name: "Bridge",
    icon: (
      <span className="flex h-9 w-[37px] items-center justify-center border-3 border-[#f4a71c] bg-[#2a1f08] text-xl leading-none font-semibold text-[#f4a71c]">
        Br
      </span>
    ),
  },
  {
    name: "Photoshop",
    state: "active",
    icon: (
      <span className="flex h-9 w-[38px] items-center justify-center border-3 border-[#16bde8] bg-[#041c26] text-xl leading-none font-semibold text-[#16bde8]">
        Ps
      </span>
    ),
  },
  { name: "Chrome", icon: <ChromeIcon /> },
  {
    name: "VLC",
    icon: (
      <svg viewBox="0 0 36 38" className="h-[38px] w-9" aria-hidden="true">
        <path d="M6 27h24l5 10H1z" fill="#f08a1a" />
        <path d="M16 1h4l9 29c-5 4-17 4-22 0z" fill="#f4f4f4" />
        <path d="M16 1h4l2 7c-2 1.500-6 1.500-8 0zM12 14c3 2 9 2 12 0l2.300 8c-4 3-12.600 3-16.600 0z" fill="#f08a1a" />
        <path d="M1 35h34v2H1z" fill="#c9660b" />
      </svg>
    ),
  },
  {
    name: "Incognito",
    icon: (
      <svg viewBox="0 0 40 40" className="size-10" aria-hidden="true">
        <rect x="1" y="1" width="38" height="38" rx="5" fill="#fb9522" />
        <path d="M5 6h30v16H5z" fill="#4b4b4b" />
        <path d="M11 10h18v9H11z" fill="#777" />
        <path d="M1 18h38v3l-2 1c0 6-3 8-8 8s-7-3-8-6h-2c-1 3-3 6-8 6s-8-2-8-8l-2-1z" fill="#f7f7f7" />
        <path d="M5 20h12c0 5-2 8-6 8s-6-3-6-8zM23 20h12c0 5-2 8-6 8s-6-3-6-8z" fill="#3a3a3a" />
        <path d="M18 29h4v4h6v3H12v-3h6z" fill="#fff" />
      </svg>
    ),
  },
  {
    name: "PuTTY",
    icon: (
      <svg viewBox="0 0 40 40" className="size-10" aria-hidden="true">
        <g stroke="#111" strokeWidth="1">
          <path d="M19 3l3-2h15v12h2v5H20v-5h-1z" fill="#d5d5d5" />
          <path d="M22 4h11v9H22z" fill="#0a0ae0" />
          <path d="M4 23l3-2h14v12h3l-3 6H2v-5h2z" fill="#d5d5d5" />
          <path d="M8 24h11v8H8z" fill="#0a0ae0" />
          <path d="M29 7L15 18l5 1-8 9 13-9-4-2z" fill="#f8f020" stroke="#555" strokeWidth=".5" />
        </g>
      </svg>
    ),
  },
  {
    name: "WhatsApp",
    icon: (
      <svg viewBox="0 0 36 36" className="size-9" aria-hidden="true">
        <path d="M1 35l3-9A17 17 0 1 1 11 33z" fill="#fff" />
        <path d="M5 31l2-6a14 14 0 1 1 5 4.500z" fill="#2bbf50" />
        <path d="M12 9c2-1.500 3 0 4 3 .5 1.500-1.500 2-1 3 1.500 2.500 3.500 4.500 6 5.500 1 .3 1.500-2 3-1.500 2 .8 4.500 2 4 3-1 4-5 4.500-9 3-5-2-9-7-9.500-11-.2-2 1-4 2.500-5z" fill="#fff" />
      </svg>
    ),
  },
  {
    name: "KMPlayer",
    icon: (
      <svg viewBox="0 0 36 30" className="h-[30px] w-9" aria-hidden="true">
        <path d="M35 0v30L18 15z" fill="#cdbcf5" />
        <path d="M1 0l24 15L1 30z" fill="#6027c4" />
      </svg>
    ),
  },
  {
    name: "Cocktail",
    icon: (
      <svg viewBox="0 0 38 38" className="size-[38px]" aria-hidden="true">
        <path d="M5 1l3 2 3 14-2 1z" fill="#c23cb0" />
        <path d="M2 12h18c0 8-3 14-7 15v7l4 2H7l3-2v-7C5 26 2 20 2 12z" fill="#e8d8d0" opacity=".85" />
        <path d="M2 14h18c-1 7-4 11-9 11s-8-4-9-11z" fill="#df3b1c" />
        <path d="M4 19h14c-1 4-4 6-7 6s-6-2-7-6z" fill="#f0762a" />
        <path d="M14 7c3-2 6-1 7 2l-5 1z" fill="#35b33f" />
        <path d="M27 14c-4-4-5-8-5-10l5 5 2-9 3 8 5-5c0 4-2 9-5 12z" fill="#2d7a2b" />
        <ellipse cx="28.500" cy="24" rx="8" ry="10" fill="#b98325" />
        <path d="M22 18l12 13M21 24l9 9M26 15l10 10M35 18L23 31M36 24l-9 9M30 15L20 26" stroke="#6e4710" strokeWidth=".9" />
      </svg>
    ),
  },
  { name: "Chrome 2", state: "open", icon: <ChromeIcon /> },
];

const appState = (state?: "open" | "active") => {
  if (state === "active") return "rounded-xs border border-white/80 bg-linear-to-b from-white/90 via-[#cfe5f3] to-[#8fc9ea]";
  if (state === "open") return "rounded-xs border border-white/70 bg-linear-to-b from-white/55 to-white/10";
  return "";
};

const Taskbar: React.FC = () => (
  <footer className="relative flex h-[49px] shrink-0 overflow-hidden border-t border-[#b5cfe3] bg-[linear-gradient(90deg,#1a5486,#2a7fb8_8%,#3a9bd0_13%,#45a0d6_24%,#55acdc_33%,#3e97cf_40%,#2f86c6_48%,#2272b8_62%,#1c5fa8_84%,#1b4980_86%,#173f72)]">
    <svg className="absolute inset-0 size-full" aria-hidden="true">
      <path d="M1748 -10Q1790 14 1838 62" fill="none" stroke="#5f9fdc" strokeWidth="22" opacity=".5" />
      <path d="M1748 -10Q1790 14 1838 62" fill="none" stroke="#b5d5f5" strokeWidth="12" opacity=".9" />
      <path d="M195 50L225 0M25 50L75 0M120 50L150 0" stroke="#fff" strokeWidth="9" opacity=".12" />
    </svg>
    <button aria-label="Start" className="relative flex w-[71px] items-center pl-[11px]">
      <svg viewBox="0 0 44 44" className="size-11" aria-hidden="true">
        <defs>
          <radialGradient id="orb" cx=".5" cy=".95" r=".95">
            <stop offset="0" stopColor="#3fe0ff" />
            <stop offset=".45" stopColor="#1276b5" />
            <stop offset="1" stopColor="#12365c" />
          </radialGradient>
        </defs>
        <circle cx="21.500" cy="22" r="20.500" fill="url(#orb)" stroke="#9fc6dd" strokeWidth="1.300" />
        <path d="M3 19a18.500 17 0 0 1 37 0c-10 4-27 4-37 0z" fill="#fff" opacity=".35" />
        <path d="M12 13c3-2 6-2 9 0l-2 9c-3-2-6-2-9 0z" fill="#ee5a24" />
        <path d="M23 14c3 2 6 2 10 0l-2 9c-4 2-7 2-10 0z" fill="#90c53f" />
        <path d="M9.500 24c3-2 6-2 9 0l-2 9c-3-2-6-2-9 0z" fill="#38a4e0" />
        <path d="M20.500 25c3 2 6 2 10 0l-2 9c-4 2-7 2-10 0z" fill="#fbc82c" />
      </svg>
    </button>
    <nav className="relative flex gap-[3px] pb-[2px]">
      {TASKBAR_APPS.map((app) => (
        <button
          key={app.name}
          aria-label={app.name}
          className={`flex w-[67px] items-center justify-center ${appState(app.state)}`}
        >
          {app.icon}
        </button>
      ))}
    </nav>
    <div className="relative ml-auto flex items-center">
      <svg viewBox="0 0 232 22" className="h-[22px] w-[232px]" aria-hidden="true">
        <path d="M2 2h8v7H2z" fill="#f6a31c" />
        <path d="M10 2h10v6l-8 2z" fill="#2b7bd1" />
        <path d="M1 9h9l1 10H2z" fill="#3aa63c" />
        <path d="M11 9h9l-2 12h-5z" fill="#dc3526" />
        <rect x="31" y="1" width="20" height="20" rx="2" fill="#cfe3f5" />
        <circle cx="40" cy="12" r="7" fill="#fff" />
        <path d="M47 3l2 2-10 11-3 1 1-3z" fill="#f4b41d" stroke="#8a6a20" strokeWidth=".5" />
        <rect x="61" y="1" width="20" height="20" rx="2" fill="#1b83e8" />
        <circle cx="71" cy="10" r="8" fill="#fff" />
        <path d="M64 10l4-3.500V9h6V6.500l4 3.500-4 3.500V11h-6v2.500z" fill="#1b83e8" />
        <path d="M71 15h10v5H71z" fill="#7bc421" />
        <path d="M92 7h3l5-6v20l-5-6h-3z" fill="#fff" />
        <path d="M103 7c2 2 2 6 0 8M106 4c4 4 4 10 0 14" fill="none" stroke="#e0e8f0" strokeWidth="1.300" />
        <rect x="125" y="2" width="11" height="17" rx="3" fill="#2b2b2b" transform="rotate(-12 130 10)" />
        <path d="M127 3c-6 2-7 8-4 13" fill="none" stroke="#3b9be2" strokeWidth="2.500" />
        <path d="M136 5c5 3 5 9 0 14h-4" fill="none" stroke="#e7a024" strokeWidth="2.800" />
        <path d="M151 11l10-7 5 2-9 8z" fill="#b8bcc0" />
        <circle cx="166" cy="16" r="5" fill="#3fae3f" stroke="#fff" />
        <path d="M163.500 16l2 2 3-4" fill="none" stroke="#fff" strokeWidth="1.300" />
        <path d="M188 5h13v11h-13z" fill="#1d3550" stroke="#fff" strokeWidth="1.500" />
        <path d="M191 19h8M195 16v3" stroke="#fff" strokeWidth="2" />
        <path d="M182 2h5v8h-5zM184.500 10v8h4" fill="none" stroke="#fff" strokeWidth="1.500" />
        <path d="M212 2v18" stroke="#fff" strokeWidth="1.500" />
        <path d="M213 3h6v2h6v8h-6v-2h-6z" fill="#fff" />
        <circle cx="224" cy="15" r="5.500" fill="#d42b2b" />
        <path d="M221.500 12.500l5 5M226.500 12.500l-5 5" stroke="#fff" strokeWidth="1.600" />
      </svg>
      <div className="mr-3 ml-[18px] w-[80px] text-center text-[14px] leading-[22px] text-white">
        <div>18:39</div>
        <div>04/02/2018</div>
      </div>
      <button aria-label="Mostra desktop" className="h-full w-[14px] border border-[#7e9cb8] bg-linear-to-br from-white/45 to-white/5" />
    </div>
  </footer>
);

const Annotations: React.FC = () => (
  <svg
    className="pointer-events-none absolute top-0 left-0 h-[760px] w-[860px]"
    fill="none"
    stroke="#d90404"
    strokeWidth="12"
    strokeLinecap="round"
    strokeLinejoin="round"
    aria-hidden="true"
  >
    <path d="M88 -10Q74 4 66 18Q56 36 49 52Q40 70 27 86Q12 106 -6 128" />
    <path d="M640 -6Q664 2 676 14Q684 22 682 30L656 67Q638 92 629 112Q622 128 585 157Q565 180 540 192Q530 198 513 202L451 220L402 230L375 233L348 237Q330 239 317 237L281 246L246 251L192 262L134 274L76 287Q36 293 -8 292M662 -4L672 2" />
    <path
      strokeWidth="11"
      d="M530 444Q500 438 480 449Q452 462 440 500Q434 516 435 534L442 574Q444 596 455 618L480 664Q490 684 500 699Q510 714 527 720Q545 727 563 728Q610 732 647 727Q668 723 687 718L730 704Q752 698 770 687Q790 675 800 657Q808 642 808 622Q808 584 797 565Q789 548 773 537Q752 523 727 500Q708 487 680 479L630 468L593 457Q573 451 553 451L520 453"
    />
  </svg>
);

export default function App() {
  return (
    <div className="relative flex h-screen w-full flex-col overflow-hidden bg-[#535353] font-['Open_Sans','Noto_Sans',sans-serif]">
      <TitleBar />
      <OptionsBar />
      <div className="flex min-h-0 flex-1">
        <Toolbar />
        <div className="flex min-w-0 flex-1 flex-col">
          <main className="relative min-h-0 flex-1 overflow-hidden bg-[#262626]">
            <EmbeddedWindow />
            <SystemInfoDialog />
            <HistoryPanel />
          </main>
          <Timeline />
        </div>
        <Dock />
      </div>
      <Taskbar />
      <Annotations />
    </div>
  );
}
